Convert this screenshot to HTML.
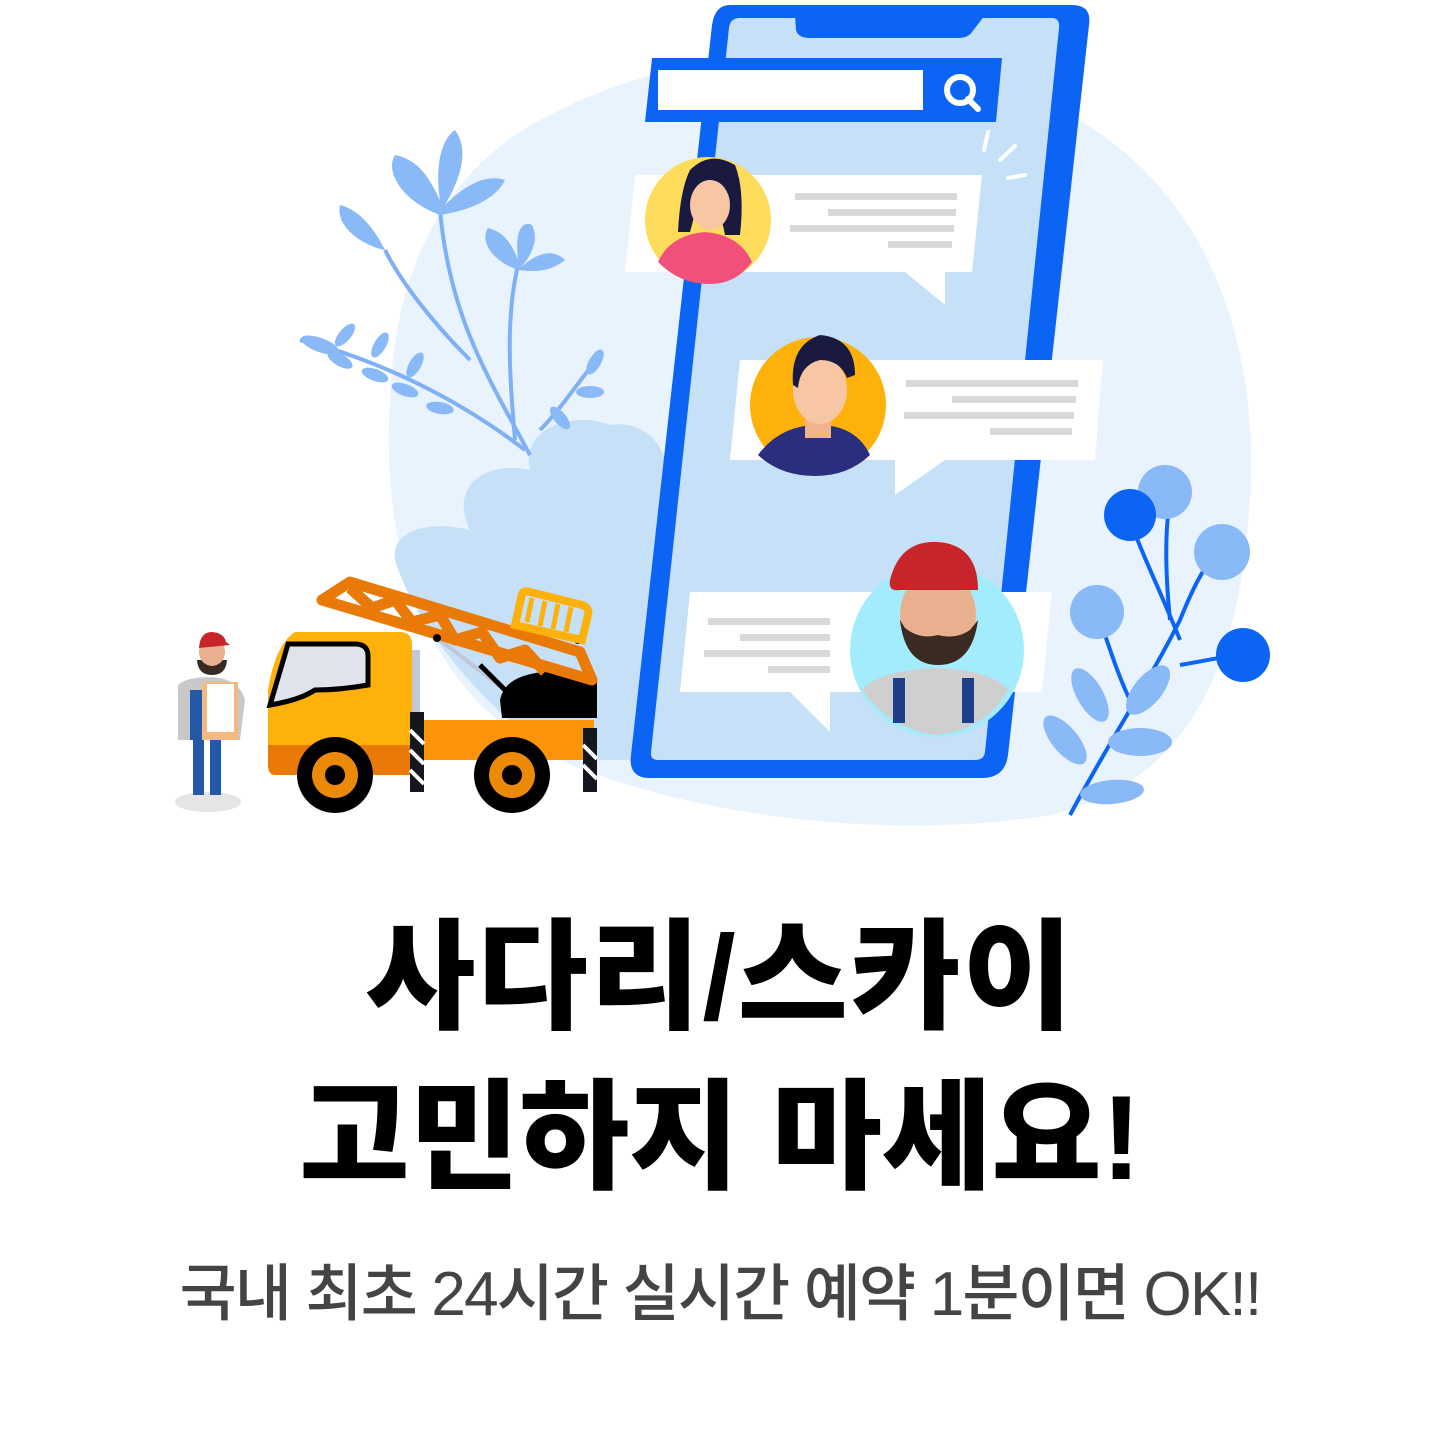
<!DOCTYPE html>
<html><head><meta charset="utf-8"><style>
html,body{margin:0;padding:0;background:#fff;width:1440px;height:1440px;overflow:hidden}
svg{position:absolute;left:0;top:0}
.t{position:absolute;left:0;width:1440px;text-align:center;font-family:"Liberation Sans","Noto Sans CJK KR",sans-serif;white-space:nowrap}
.h{font-size:120px;font-weight:900;color:#000;line-height:1}
.s{font-size:62px;font-weight:500;color:#444;letter-spacing:-1.8px;line-height:1}
</style></head><body>
<svg width="1440" height="1440" viewBox="0 0 1440 1440">
<path d="M560 110 C700 40 900 30 1060 110 C1200 180 1260 330 1250 500 C1240 650 1200 780 1050 815 C900 840 700 820 560 760 C430 700 380 560 390 400 C395 260 450 160 560 110Z" fill="#e8f3fd"/>
<path d="M395 560 C390 530 430 520 470 530 C450 490 480 460 530 470 C520 430 570 410 610 425 C640 420 660 440 665 460 L650 760 L560 760 C500 720 420 640 395 560Z" fill="#c6e0f7"/>
<g stroke="#7fb0f5" stroke-width="4" fill="none">
<path d="M530 455 C490 380 450 320 440 210"/>
<path d="M525 450 C460 400 380 360 300 340"/>
<path d="M515 440 C510 380 505 320 518 265"/>
<path d="M540 430 C560 410 580 380 600 355"/>
<path d="M470 360 C430 320 400 280 385 250"/>
</g>
<g fill="#8ab9f7">
<path d="M440 215 C400 200 385 170 395 155 C420 160 430 180 440 200 C435 170 440 140 455 130 C470 150 460 180 445 205 C470 180 490 175 505 180 C495 200 470 210 440 215Z"/>
<path d="M518 270 C490 260 480 240 488 228 C505 232 512 245 518 260 C515 235 520 220 532 225 C540 240 530 258 520 268 C540 250 555 250 565 260 C550 272 535 272 518 270Z"/>
<path d="M385 250 C360 245 335 225 340 205 C360 210 375 230 385 250Z"/>
<ellipse cx="320" cy="345" rx="20" ry="7" transform="rotate(20 320 345)"/>
<ellipse cx="345" cy="335" rx="14" ry="6" transform="rotate(-50 345 335)"/>
<ellipse cx="340" cy="360" rx="14" ry="6" transform="rotate(30 340 360)"/>
<ellipse cx="380" cy="345" rx="14" ry="6" transform="rotate(-60 380 345)"/>
<ellipse cx="375" cy="375" rx="14" ry="6" transform="rotate(20 375 375)"/>
<ellipse cx="415" cy="365" rx="14" ry="6" transform="rotate(-60 415 365)"/>
<ellipse cx="405" cy="390" rx="14" ry="6" transform="rotate(20 405 390)"/>
<ellipse cx="440" cy="408" rx="14" ry="6" transform="rotate(10 440 408)"/>
<ellipse cx="595" cy="362" rx="14" ry="6" transform="rotate(-60 595 362)"/>
<ellipse cx="590" cy="392" rx="14" ry="6" transform="rotate(0 590 392)"/>
<ellipse cx="560" cy="418" rx="14" ry="6" transform="rotate(50 560 418)"/>
</g>
<path d="M730 5 L1072 5 Q1092 5 1089 25 L1008 755 Q1005 778 982 778 L650 778 Q628 778 631 755 L712 25 Q715 5 730 5Z" fill="#0b64f4"/>
<path d="M740 18 L1052 18 Q1060 18 1059 28 L985 752 Q984 760 975 760 L658 760 Q650 760 651 752 L729 28 Q730 18 740 18Z" fill="#c6e0f7"/>
<path d="M795 15 L985 15 L972 32 Q968 38 958 38 L810 38 Q798 38 796 30Z" fill="#0b64f4"/>
<path d="M652 58 L1002 58 L996 122 L645 122Z" fill="#0b64f4"/>
<rect x="658" y="70" width="265" height="40" fill="#fff"/>
<circle cx="960" cy="90" r="13" fill="none" stroke="#fff" stroke-width="6"/>
<line x1="968" y1="99" x2="978" y2="109" stroke="#fff" stroke-width="6" stroke-linecap="round"/>
<g stroke="#fff" stroke-width="4" stroke-linecap="round"><line x1="988" y1="132" x2="984" y2="150"/><line x1="1015" y1="146" x2="1000" y2="160"/><line x1="1025" y1="175" x2="1008" y2="178"/></g>
<path d="M635 175 L982 175 L972 272 L945 272 L945 305 L905 272 L625 272Z" fill="#fff"/>
<g fill="#d9d9d9"><rect x="795" y="193" width="162" height="7"/><rect x="828" y="209" width="128" height="7"/><rect x="790" y="225" width="164" height="7"/><rect x="888" y="241" width="64" height="7"/></g>
<circle cx="708" cy="220" r="63" fill="#fddc5c"/>
<path d="M658 262 Q670 235 705 232 Q740 235 752 262 Q735 285 708 284 Q680 284 658 262Z" fill="#f0507a"/>
<path d="M690 170 Q710 150 735 165 Q745 190 740 235 L725 235 Q720 205 700 185 Q695 215 690 232 L678 232 Q680 190 690 170Z" fill="#1a1a40"/>
<ellipse cx="710" cy="205" rx="20" ry="25" fill="#f7c6a3"/>
<path d="M690 190 Q705 170 732 188 Q725 175 708 172 Q690 175 690 190Z" fill="#1a1a40"/>
<path d="M740 360 L1103 360 L1095 460 L945 460 L895 495 L895 460 L730 460Z" fill="#fff"/>
<g fill="#d9d9d9"><rect x="906" y="380" width="172" height="7"/><rect x="952" y="396" width="124" height="7"/><rect x="904" y="412" width="170" height="7"/><rect x="990" y="428" width="82" height="7"/></g>
<circle cx="818" cy="405" r="68" fill="#fdb10a"/>
<path d="M758 455 Q780 425 818 425 Q856 425 870 455 Q848 476 815 476 Q780 476 758 455Z" fill="#2a2e7e"/>
<rect x="805" y="410" width="26" height="28" fill="#f0b48a"/>
<ellipse cx="820" cy="390" rx="27" ry="34" fill="#f7c6a3"/>
<path d="M793 385 Q790 345 820 335 Q855 338 855 375 L847 378 Q840 360 820 360 Q800 365 798 388Z" fill="#1a1a40"/>
<path d="M690 592 L1052 592 L1042 692 L830 692 L830 732 L790 692 L680 692Z" fill="#fff"/>
<g fill="#d9d9d9"><rect x="708" y="618" width="122" height="7"/><rect x="740" y="634" width="90" height="7"/><rect x="704" y="650" width="126" height="7"/><rect x="768" y="666" width="62" height="7"/></g>
<circle cx="937" cy="650" r="87" fill="#a2ecfd"/>
<path d="M862 690 Q880 670 937 668 Q992 670 1008 690 Q985 730 937 735 Q890 730 862 690Z" fill="#cfcfcf"/>
<rect x="893" y="678" width="12" height="45" fill="#1d3f8a"/><rect x="962" y="678" width="12" height="45" fill="#1d3f8a"/>
<ellipse cx="938" cy="615" rx="38" ry="45" fill="#e8b08e"/>
<path d="M900 620 Q905 665 938 665 Q972 665 978 620 L970 630 Q955 640 938 635 Q920 640 905 628Z" fill="#3a2a22"/>
<path d="M890 580 Q900 540 938 542 Q978 545 978 590 L900 590 Q888 592 890 580Z" fill="#c8252a"/>
<g stroke="#0b64f4" stroke-width="4" fill="none">
<path d="M1070 815 C1110 740 1150 680 1180 620 C1200 570 1215 550 1220 560"/>
<path d="M1180 640 C1160 590 1140 550 1130 520"/>
<path d="M1180 665 C1210 660 1230 655 1245 655"/>
<path d="M1170 620 C1165 570 1165 530 1170 500"/>
<path d="M1130 700 C1120 680 1110 650 1100 620"/>
</g>
<circle cx="1165" cy="492" r="27" fill="#8ab9f7"/>
<circle cx="1222" cy="552" r="28" fill="#8ab9f7"/>
<circle cx="1097" cy="612" r="27" fill="#8ab9f7"/>
<circle cx="1130" cy="515" r="26" fill="#0b64f4"/>
<circle cx="1243" cy="655" r="27" fill="#0b64f4"/>
<g fill="#8ab9f7">
<ellipse cx="1148" cy="690" rx="30" ry="14" transform="rotate(-50 1148 690)"/>
<ellipse cx="1090" cy="695" rx="30" ry="13" transform="rotate(60 1090 695)"/>
<ellipse cx="1140" cy="742" rx="32" ry="14" transform="rotate(0 1140 742)"/>
<ellipse cx="1065" cy="740" rx="30" ry="13" transform="rotate(50 1065 740)"/>
<ellipse cx="1112" cy="792" rx="32" ry="12" transform="rotate(-5 1112 792)"/>
</g>
<ellipse cx="208" cy="802" rx="33" ry="10" fill="#e5e5e5"/>
<rect x="193" y="730" width="11" height="65" fill="#2459a8"/><rect x="210" y="730" width="11" height="65" fill="#2459a8"/>
<path d="M178 685 Q190 675 220 678 Q240 682 245 700 L240 740 L178 740Z" fill="#c8c8c8"/>
<rect x="190" y="690" width="35" height="50" fill="#2459a8"/>
<rect x="202" y="682" width="36" height="58" fill="#f2b980"/><rect x="207" y="684" width="27" height="48" fill="#fff"/>
<path d="M197 660 Q198 675 212 675 Q226 675 227 660Z" fill="#3a2a22"/>
<ellipse cx="212" cy="652" rx="13" ry="14" fill="#e8b08e"/>
<path d="M199 648 Q200 632 212 632 Q224 633 226 642 L230 645 L199 648Z" fill="#c8252a"/>
<!-- truck -->
<rect x="412" y="650" width="8" height="70" fill="#c0c8d8"/>
<path d="M440 640 L505 690" stroke="#c0c8d8" stroke-width="4"/>
<path d="M480 665 L505 690" stroke="#000" stroke-width="5"/>
<path d="M500 700 Q505 675 545 672 L597 680 L597 718 L502 718Z" fill="#000"/>
<g fill="none" stroke="#ea7a08" stroke-width="11" stroke-linejoin="round">
<path d="M322 600 L350 582 L580 652 L592 680 Z"/>
<path d="M350 588 L372 608 L395 600 L412 622 L440 615 L455 640 L482 632 L500 658 L525 650 L545 672"/>
</g>
<circle cx="437" cy="638" r="4" fill="#000"/><circle cx="578" cy="640" r="4" fill="#000"/>
<path d="M522 594 Q524 590 530 592 L582 605 Q590 608 588 615 L582 640 L515 625Z" fill="none" stroke="#fdb10a" stroke-width="8"/>
<g stroke="#fdb10a" stroke-width="5"><line x1="532" y1="598" x2="527" y2="622"/><line x1="545" y1="601" x2="540" y2="626"/><line x1="558" y1="604" x2="553" y2="629"/><line x1="571" y1="607" x2="566" y2="632"/></g>
<path d="M295 632 L400 632 Q412 632 412 645 L412 760 L268 760 L268 690 Q275 645 295 632Z" fill="#fdb10a"/>
<path d="M288 644 L355 644 Q368 644 368 656 L368 685 Q340 690 315 690 Q300 700 270 705 Z" fill="#dfe3ec" stroke="#000" stroke-width="5"/>
<rect x="412" y="720" width="182" height="40" fill="#fb9408"/>
<path d="M268 745 L412 745 L412 775 L275 775 Q268 775 268 765Z" fill="#ea7a08"/>
<rect x="410" y="712" width="14" height="80" fill="#15171f"/>
<g stroke="#fff" stroke-width="4"><line x1="410" y1="730" x2="424" y2="744"/><line x1="410" y1="750" x2="424" y2="764"/><line x1="410" y1="770" x2="424" y2="784"/></g>
<rect x="583" y="728" width="14" height="64" fill="#15171f"/>
<g stroke="#fff" stroke-width="4"><line x1="583" y1="745" x2="597" y2="759"/><line x1="583" y1="765" x2="597" y2="779"/></g>
<circle cx="335" cy="775" r="38" fill="#000"/><circle cx="335" cy="775" r="23" fill="#ea8a08"/><circle cx="335" cy="775" r="10" fill="#000"/>
<circle cx="512" cy="775" r="38" fill="#000"/><circle cx="512" cy="775" r="23" fill="#ea8a08"/><circle cx="512" cy="775" r="10" fill="#000"/>
</svg>
<div class="t h" style="top:918px;letter-spacing:2px">사다리/스카이</div>
<div class="t h" style="top:1078px;letter-spacing:-0.5px">고민하지 마세요!</div>
<div class="t s" style="top:1264px">국내 최초 24시간 실시간 예약 1분이면 OK!!</div>
</body></html>
